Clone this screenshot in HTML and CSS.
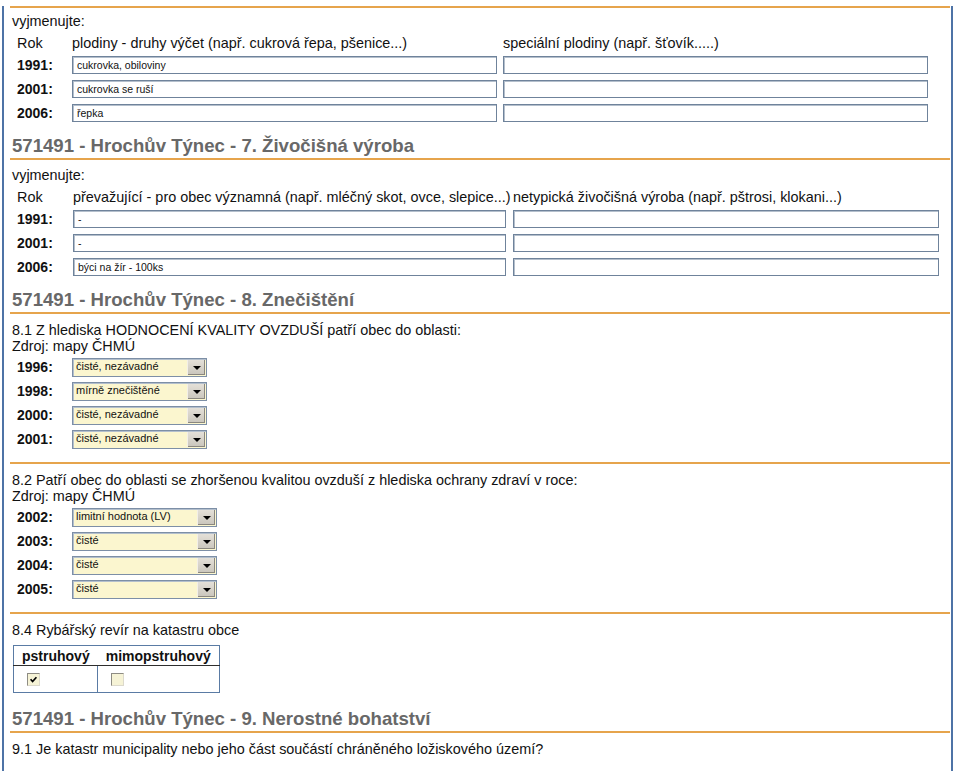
FILE: index.html
```html
<!DOCTYPE html>
<html lang="cs">
<head>
<meta charset="utf-8">
<title>571491 - Hrochův Týnec</title>
<link rel="stylesheet" href="styles.css">
</head>
<body>
<div class="page">
  <div class="rule first"></div>

  <section class="sect s-top">
    <p class="lead">vyjmenujte:</p>
    <div class="grid g1">
      <span class="rok">Rok</span>
      <span class="colh">plodiny - druhy výčet (např. cukrová řepa, pšenice...)</span>
      <span class="colh">speciální plodiny (např. šťovík.....)</span>

      <b class="yr">1991:</b><span class="inp">cukrovka, obiloviny</span><span class="inp"></span>
      <b class="yr">2001:</b><span class="inp">cukrovka se ruší</span><span class="inp"></span>
      <b class="yr">2006:</b><span class="inp">řepka</span><span class="inp"></span>
    </div>
  </section>

  <h2 class="head">571491 - Hrochův Týnec - 7. Živočišná výroba</h2>
  <section class="sect s-mid">
    <p class="lead">vyjmenujte:</p>
    <div class="grid g7">
      <span class="rok">Rok</span>
      <span class="colh">převažující - pro obec významná (např. mléčný skot, ovce, slepice...)</span>
      <span class="colh">netypická živočišná výroba (např. pštrosi, klokani...)</span>

      <b class="yr">1991:</b><span class="inp">-</span><span class="inp"></span>
      <b class="yr">2001:</b><span class="inp">-</span><span class="inp"></span>
      <b class="yr">2006:</b><span class="inp">býci na žír - 100ks</span><span class="inp"></span>
    </div>
  </section>

  <h2 class="head">571491 - Hrochův Týnec - 8. Znečištění</h2>
  <section class="sect q">
    <p class="qt">8.1 Z hlediska HODNOCENÍ KVALITY OVZDUŠÍ patří obec do oblasti:<br>Zdroj: mapy ČHMÚ</p>
    <div class="sel-grid">
      <b class="yr">1996:</b><span class="sel w135"><span class="sv">čisté, nezávadné</span><span class="sb"><span class="tri"></span></span></span>
      <b class="yr">1998:</b><span class="sel w135"><span class="sv">mírně znečištěné</span><span class="sb"><span class="tri"></span></span></span>
      <b class="yr">2000:</b><span class="sel w135"><span class="sv">čisté, nezávadné</span><span class="sb"><span class="tri"></span></span></span>
      <b class="yr">2001:</b><span class="sel w135"><span class="sv">čisté, nezávadné</span><span class="sb"><span class="tri"></span></span></span>
    </div>
  </section>
  <div class="rule"></div>
  <section class="sect q">
    <p class="qt">8.2 Patří obec do oblasti se zhoršenou kvalitou ovzduší z hlediska ochrany zdraví v roce:<br>Zdroj: mapy ČHMÚ</p>
    <div class="sel-grid">
      <b class="yr">2002:</b><span class="sel w145"><span class="sv">limitní hodnota (LV)</span><span class="sb"><span class="tri"></span></span></span>
      <b class="yr">2003:</b><span class="sel w145"><span class="sv">čisté</span><span class="sb"><span class="tri"></span></span></span>
      <b class="yr">2004:</b><span class="sel w145"><span class="sv">čisté</span><span class="sb"><span class="tri"></span></span></span>
      <b class="yr">2005:</b><span class="sel w145"><span class="sv">čisté</span><span class="sb"><span class="tri"></span></span></span>
    </div>
  </section>
  <div class="rule"></div>
  <section class="sect q">
    <p class="qt">8.4 Rybářský revír na katastru obce</p>
    <table class="fish">
      <thead>
        <tr><th>pstruhový</th><th>mimopstruhový</th></tr>
      </thead>
      <tbody>
        <tr>
          <td><span class="cb checked"><svg viewBox="0 0 9 9" width="9" height="9"><path d="M1.6 4.3 L3.6 6.5 L7.4 2.2" fill="none" stroke="#000" stroke-width="1.7"/></svg></span></td>
          <td class="divl"><span class="cb"></span></td>
        </tr>
      </tbody>
    </table>
  </section>

  <h2 class="head h9">571491 - Hrochův Týnec - 9. Nerostné bohatství</h2>
  <section class="sect q">
    <p class="qt">9.1 Je katastr municipality nebo jeho část součástí chráněného ložiskového území?</p>
  </section>
</div>
</body>
</html>
```

FILE: styles.css
```css
html, body {
  margin: 0;
  padding: 0;
  background: #ffffff;
}

body {
  font-family: "Liberation Sans", Arial, sans-serif;
  color: #111111;
  font-size: 14.4px;
}

.page {
  box-sizing: border-box;
  width: 951px;
  min-height: 771px;
  margin-left: 2px;
  border-left: 2px solid #4d73a6;
  border-right: 2px solid #4d73a6;
  padding: 0 1px 0 6px;
}

.rule {
  height: 2px;
  background: #e6a44c;
  margin-top: 11px;
}

.rule.first {
  margin-top: 6px;
}

.sect {
  padding-left: 2px;
}

.lead {
  margin: 0;
  line-height: 17px;
}

.s-top .lead {
  margin-top: 5px;
}

.s-mid .lead {
  margin-top: 7px;
}

.grid {
  display: grid;
  grid-auto-rows: 24px;
  grid-template-rows: 20px;
  align-items: center;
  margin-top: 3px;
}

.g1 {
  grid-template-columns: 54px 425px 425px;
  column-gap: 6px;
}

.g7 {
  grid-template-columns: 54px 433px 426px;
  column-gap: 7px;
}

.rok {
  padding-left: 5px;
}

.colh {
  white-space: nowrap;
}

.yr {
  font-weight: bold;
  padding-left: 5px;
  font-size: 14px;
}

.inp {
  box-sizing: border-box;
  height: 18px;
  border: 1px solid #6f839b;
  box-shadow: inset 1px 1px 0 #b4bfcc;
  background: #ffffff;
  font-size: 10.5px;
  line-height: 16px;
  padding-left: 4px;
  color: #111;
}

.head {
  margin: 11px 0 0 0;
  padding: 0 0 2px 2px;
  font-size: 18.6px;
  line-height: 20px;
  font-weight: bold;
  color: #686868;
  border-bottom: 2px solid #e6a44c;
}

.h9 {
  margin-top: 16px;
}

.q .qt {
  margin: 8px 0 0 0;
  line-height: 16px;
}

.sel-grid {
  display: grid;
  grid-template-columns: 60px auto;
  grid-auto-rows: 24px;
  align-items: center;
  justify-content: start;
  margin-top: 1px;
}

.sel {
  box-sizing: border-box;
  display: flex;
  height: 19px;
  border: 1px solid #7d8fa6;
  box-shadow: inset 1px 1px 0 #b3bfcd;
  background: #fbf6cf;
}

.w135 { width: 135px; }
.w145 { width: 145px; }

.sv {
  flex: 1;
  font-size: 11px;
  line-height: 14px;
  padding-left: 3px;
  color: #111;
}

.sb {
  width: 17px;
  margin: 1px 1px 1px 0;
  background: linear-gradient(#e4e0d8, #c9c5bc);
  border-left: 1px solid #f2efe8;
  box-shadow: inset -1px -1px 0 #8a877f;
  display: flex;
  align-items: center;
  justify-content: center;
}

.tri {
  width: 0;
  height: 0;
  border-left: 4px solid transparent;
  border-right: 4px solid transparent;
  border-top: 4px solid #000;
  margin-top: 1px;
}

.fish {
  border-collapse: collapse;
  border: 1px solid #5a7ba4;
  margin-top: 7px;
  margin-left: 1px;
}

.fish th {
  font-weight: bold;
  font-size: 14px;
  height: 19px;
  padding: 0 8px;
  border-bottom: 1px solid #2e2e2e;
  text-align: left;
  line-height: 18px;
}

.fish td {
  height: 26px;
  padding: 0 0 0 13px;
  vertical-align: middle;
}

.fish td.divl {
  border-left: 1px solid #5a7ba4;
  padding-left: 13px;
}

.cb {
  box-sizing: border-box;
  display: flex;
  align-items: center;
  justify-content: center;
  width: 13px;
  height: 13px;
  border: 1px solid #8e8c84;
  border-right-color: #dcd9cc;
  border-bottom-color: #dcd9cc;
  background: #f6f3d6;
}

.cb svg {
  display: block;
}
```
